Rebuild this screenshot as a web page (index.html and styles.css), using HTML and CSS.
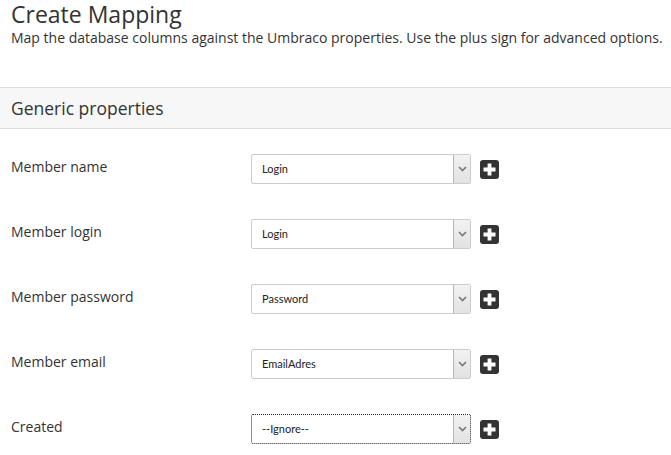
FILE: index.html
```html
<!DOCTYPE html>
<html>
<head>
<meta charset="utf-8">
<link rel="stylesheet" href="styles.css">
</head>
<body>
<div class="intro">
  <h1 class="title">Create Mapping</h1>
  <p class="desc">Map the database columns against the Umbraco properties. Use the plus sign for advanced options.</p>
</div>
<div class="section-head">Generic properties</div>
<div class="rows">
  <div class="row">
    <label class="label">Member name</label>
    <div class="select"><span class="value">Login</span><span class="arrow"><svg width="9" height="6" viewBox="0 0 9 6"><path d="M1 1l3.5 3.5L8 1" fill="none" stroke="#777" stroke-width="1.6"/></svg></span></div>
    <span class="plus"><svg width="19" height="19" viewBox="0 0 19 19"><path d="M9.5 3.5v12M3.5 9.5h12" stroke="#fff" stroke-width="3.8"/></svg></span>
  </div>
  <div class="row">
    <label class="label">Member login</label>
    <div class="select"><span class="value">Login</span><span class="arrow"><svg width="9" height="6" viewBox="0 0 9 6"><path d="M1 1l3.5 3.5L8 1" fill="none" stroke="#777" stroke-width="1.6"/></svg></span></div>
    <span class="plus"><svg width="19" height="19" viewBox="0 0 19 19"><path d="M9.5 3.5v12M3.5 9.5h12" stroke="#fff" stroke-width="3.8"/></svg></span>
  </div>
  <div class="row">
    <label class="label">Member password</label>
    <div class="select"><span class="value">Password</span><span class="arrow"><svg width="9" height="6" viewBox="0 0 9 6"><path d="M1 1l3.5 3.5L8 1" fill="none" stroke="#777" stroke-width="1.6"/></svg></span></div>
    <span class="plus"><svg width="19" height="19" viewBox="0 0 19 19"><path d="M9.5 3.5v12M3.5 9.5h12" stroke="#fff" stroke-width="3.8"/></svg></span>
  </div>
  <div class="row">
    <label class="label">Member email</label>
    <div class="select"><span class="value">EmailAdres</span><span class="arrow"><svg width="9" height="6" viewBox="0 0 9 6"><path d="M1 1l3.5 3.5L8 1" fill="none" stroke="#777" stroke-width="1.6"/></svg></span></div>
    <span class="plus"><svg width="19" height="19" viewBox="0 0 19 19"><path d="M9.5 3.5v12M3.5 9.5h12" stroke="#fff" stroke-width="3.8"/></svg></span>
  </div>
  <div class="row">
    <label class="label">Created</label>
    <div class="select focused"><span class="value">--Ignore--</span><span class="arrow"><svg width="9" height="6" viewBox="0 0 9 6"><path d="M1 1l3.5 3.5L8 1" fill="none" stroke="#777" stroke-width="1.6"/></svg></span></div>
    <span class="plus"><svg width="19" height="19" viewBox="0 0 19 19"><path d="M9.5 3.5v12M3.5 9.5h12" stroke="#fff" stroke-width="3.8"/></svg></span>
  </div>
</div>
</body>
</html>
```
FILE: styles.css
```css
html, body {
  margin: 0;
  padding: 0;
  background: #fff;
}
body {
  font-family: "Open Sans", sans-serif;
  color: #333;
  width: 671px;
  overflow: hidden;
}
.intro {
  padding: 0 0 0 11px;
}
.title {
  margin: 0;
  font-size: 23px;
  font-weight: 400;
  line-height: 28px;
  color: #333;
}
.desc {
  margin: 0;
  font-size: 14px;
  line-height: 20px;
  color: #333;
}
.section-head {
  margin-top: 39px;
  height: 40px;
  border-top: 1px solid #dcdcdc;
  border-bottom: 1px solid #dcdcdc;
  background: #f7f7f7;
  padding-left: 11px;
  font-size: 17.5px;
  line-height: 40px;
  color: #333;
}
.rows {
  padding: 25px 0 0 11px;
  display: flex;
  flex-direction: column;
  gap: 35px;
}
.row {
  display: flex;
  align-items: center;
  height: 30px;
}
.label {
  width: 240px;
  font-size: 14px;
  color: #333;
  margin-top: -5px;
}
.select {
  width: 218px;
  height: 28px;
  border: 1px solid #ccc;
  border-radius: 2px;
  display: flex;
  align-items: stretch;
  background: #fff;
}
.select.focused {
  border: 1px dotted #222;
}
.value {
  flex: 1;
  padding-left: 10px;
  font-family: Lato, sans-serif;
  font-size: 11px;
  line-height: 28px;
  color: #222;
}
.arrow {
  width: 16px;
  border-left: 1px solid #b5b5b5;
  background: linear-gradient(#f2f2f2, #e2e2e2);
  display: flex;
  align-items: center;
  justify-content: center;
}
.plus {
  margin-left: 9px;
  width: 19px;
  height: 19px;
  background: #333;
  border-radius: 3px;
  display: flex;
}
```
